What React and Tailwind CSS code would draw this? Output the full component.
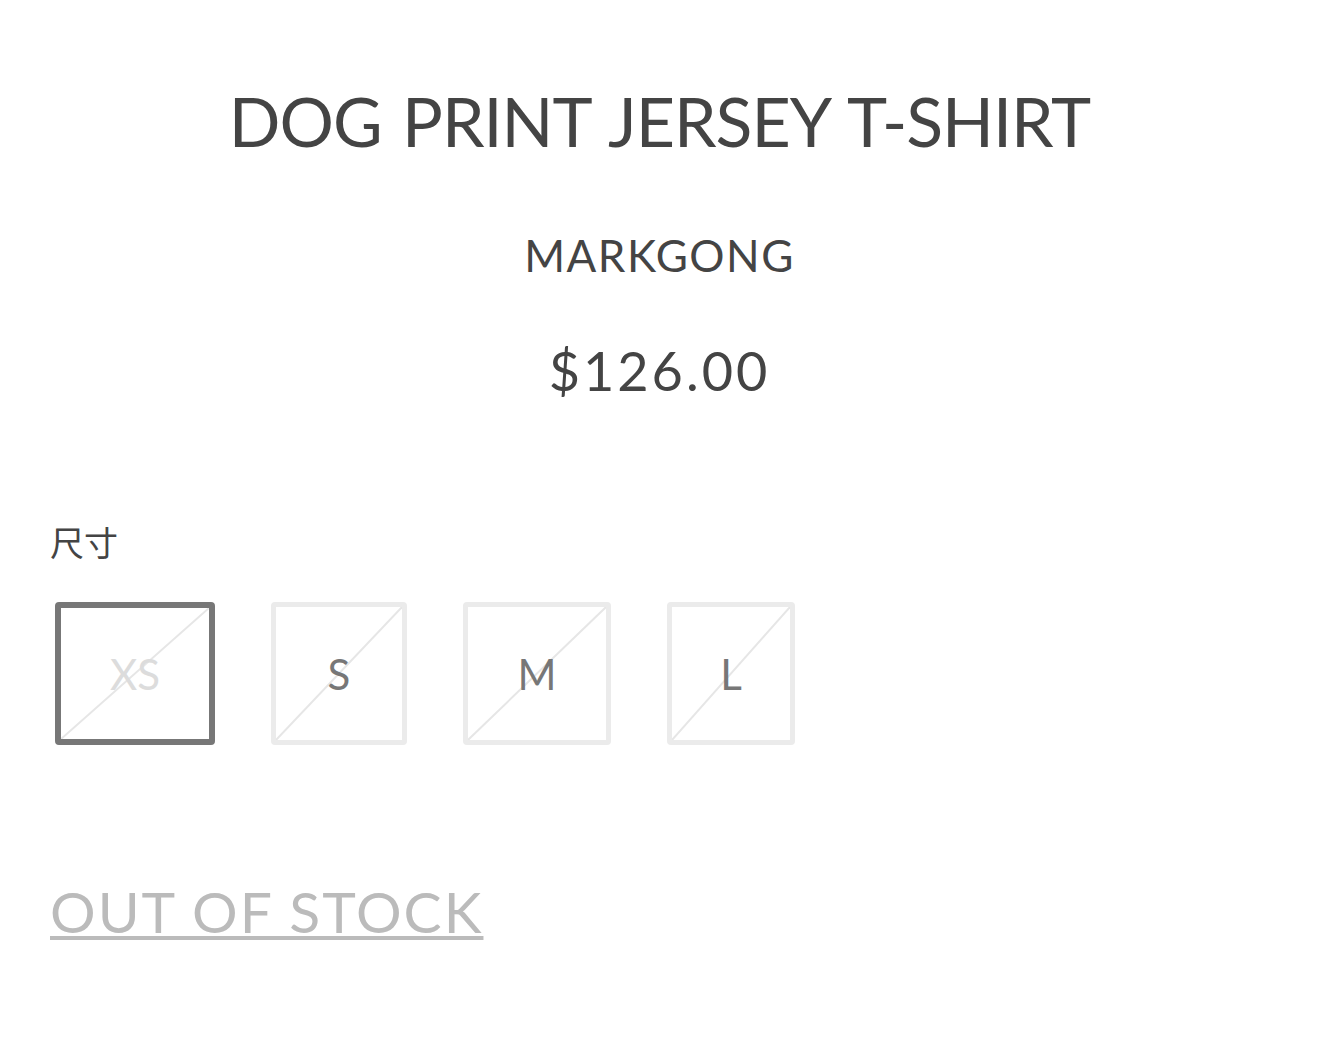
import React from 'react';

const sizes = [
  { label: 'XS', w: 'w-[160px]', active: true, soldOut: true },
  { label: 'S', w: 'w-[136px]' },
  { label: 'M', w: 'w-[148px]' },
  { label: 'L', w: 'w-[128px]' },
];

const SizeBox = ({ label, w, active, soldOut }) => (
  <button
    className={`relative ${w} h-[143px] rounded-[4px] bg-white flex items-center justify-center ${
      active ? 'border-[6px] border-[#777]' : 'border-[5px] border-[#ebebeb]'
    }`}
  >
    <svg className="absolute inset-0 w-full h-full" viewBox="0 0 100 100" preserveAspectRatio="none">
      <line x1="0" y1="100" x2="100" y2="0" stroke="#e6e6e6" strokeWidth="2" vectorEffect="non-scaling-stroke" />
    </svg>
    <span className={`relative text-[42px] leading-none ${soldOut ? 'text-[#dcdcdc]' : 'text-[#777]'}`}>
      {label}
    </span>
  </button>
);

const App = () => {
  return (
    <div
      className="w-[1319px] h-[1055px] bg-white text-[#444] overflow-hidden"
      style={{ fontFamily: 'Lato, "Noto Sans CJK SC", sans-serif' }}
    >
      <div className="pt-[87px] flex flex-col items-center">
        <h1 className="text-[68px] leading-none tracking-[-1px] [word-spacing:4px]">DOG PRINT JERSEY T-SHIRT</h1>
        <div className="mt-[78px] text-[44px] leading-none tracking-[1.5px]">MARKGONG</div>
        <div className="mt-[67px] text-[54px] leading-none tracking-[3px]">$126.00</div>
      </div>

      <div className="px-[50px] mt-[127px]">
        <div className="text-[34px] leading-none text-[#444]" style={{ fontFamily: '"Noto Sans CJK SC", sans-serif' }}>
          尺寸
        </div>
        <div className="mt-[43px] flex gap-[56px] pl-[5px]">
          {sizes.map((s) => (
            <SizeBox key={s.label} {...s} />
          ))}
        </div>
        <a href="#" className="inline-block mt-[138px] text-[57px] leading-none text-[#bbb] tracking-[2px] underline decoration-[4px] underline-offset-[3px]">
          OUT OF STOCK
        </a>
      </div>
    </div>
  );
};

export default App;
